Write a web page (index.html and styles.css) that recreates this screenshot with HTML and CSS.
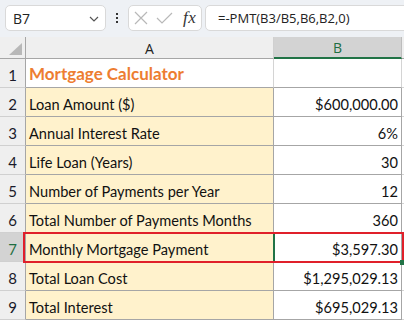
FILE: index.html
```html
<!DOCTYPE html>
<html>
<head>
<meta charset="utf-8">
<link rel="stylesheet" href="styles.css">
</head>
<body>
<div class="toolbar">
  <div class="namebox">
    <span class="nb-text">B7</span>
    <svg class="chev" width="10" height="6" viewBox="0 0 10 6"><path d="M1 1 L5 5 L9 1" fill="none" stroke="#555" stroke-width="1.2"/></svg>
  </div>
  <div class="dots"><span></span><span></span><span></span></div>
  <div class="fxbox">
    <svg class="ic" width="14" height="14" viewBox="0 0 14 14"><path d="M1 1 L13 13 M13 1 L1 13" stroke="#b8b8b8" stroke-width="1.2" fill="none"/></svg>
    <svg class="ic" width="17" height="12" viewBox="0 0 17 12"><path d="M1 6 L6 11 L16 1" stroke="#b8b8b8" stroke-width="1.2" fill="none"/></svg>
    <span class="fx">fx</span>
  </div>
  <div class="formula">=-PMT(B3/B5,B6,B2,0)</div>
</div>
<div class="sheet">
  <div class="corner"><span class="tri"></span></div>
  <div class="ch">A</div>
  <div class="ch sel">B</div>
  <div class="ch rest"></div>

  <div class="rh">1</div>
  <div class="c a plain title">Mortgage Calculator</div>
  <div class="c b plain"></div>
  <div class="c rest"></div>

  <div class="rh">2</div>
  <div class="c a">Loan Amount ($)</div>
  <div class="c b">$600,000.00</div>
  <div class="c rest"></div>

  <div class="rh">3</div>
  <div class="c a">Annual Interest Rate</div>
  <div class="c b">6%</div>
  <div class="c rest"></div>

  <div class="rh">4</div>
  <div class="c a">Life Loan (Years)</div>
  <div class="c b">30</div>
  <div class="c rest"></div>

  <div class="rh">5</div>
  <div class="c a">Number of Payments per Year</div>
  <div class="c b">12</div>
  <div class="c rest"></div>

  <div class="rh">6</div>
  <div class="c a">Total Number of Payments Months</div>
  <div class="c b">360</div>
  <div class="c rest"></div>

  <div class="rh rsel">7</div>
  <div class="c a">Monthly Mortgage Payment</div>
  <div class="c b">$3,597.30</div>
  <div class="c rest"></div>

  <div class="rh">8</div>
  <div class="c a">Total Loan Cost</div>
  <div class="c b">$1,295,029.13</div>
  <div class="c rest"></div>

  <div class="rh">9</div>
  <div class="c a">Total Interest</div>
  <div class="c b">$695,029.13</div>
  <div class="c rest"></div>

  <div class="selbox"></div>
  <div class="redbox"></div>
  <div class="handle"></div>
</div>
</body>
</html>
```
FILE: styles.css
```css
* { box-sizing: border-box; }
html, body { margin: 0; padding: 0; }
body {
  width: 404px;
  height: 321px;
  overflow: hidden;
  background: #fff;
  font-family: "Lato", "Liberation Sans", sans-serif;
}
.toolbar {
  height: 37px;
  background: #eef1f5;
  display: flex;
  align-items: flex-start;
  padding: 5px 0 0 5px;
}
.namebox {
  width: 101px;
  height: 26px;
  background: #fff;
  border: 1px solid #d9d9d9;
  border-radius: 5px;
  display: flex;
  align-items: center;
  justify-content: space-between;
  padding: 0 6px 0 7px;
}
.nb-text {
  font-family: "Open Sans", "Noto Sans", sans-serif;
  font-size: 14px;
  color: #222;
}
.chev { margin-top: 1px; }
.dots {
  width: 22px;
  height: 26px;
  display: flex;
  flex-direction: column;
  align-items: center;
  justify-content: center;
  gap: 2px;
}
.dots span {
  width: 2px;
  height: 2px;
  background: #333;
}
.fxbox {
  width: 74px;
  height: 26px;
  background: #fff;
  border: 1px solid #d9d9d9;
  border-radius: 5px;
  display: flex;
  align-items: center;
  padding: 0 0 0 5px;
  gap: 8px;
}
.fx {
  font-family: "Liberation Serif", "DejaVu Serif", serif;
  font-style: italic;
  font-size: 17px;
  color: #333;
  margin-left: 2px;
  letter-spacing: 0.5px;
}
.formula {
  flex: 1;
  margin-left: 3px;
  margin-right: -10px;
  height: 26px;
  background: #fff;
  border: 1px solid #d9d9d9;
  border-radius: 5px;
  display: flex;
  align-items: center;
  padding-left: 12px;
  font-family: "Open Sans", "Noto Sans", sans-serif;
  font-size: 13px;
  color: #222;
}
.sheet {
  position: relative;
  display: grid;
  grid-template-columns: 26px 248px 128px 2px;
  grid-template-rows: 22px repeat(9, 29px);
  height: 284px;
  overflow: hidden;
}
.corner {
  position: relative;
  background: #efefef;
  border-right: 1px solid #a6a6a6;
  border-bottom: 1px solid #a6a6a6;
}
.tri {
  position: absolute;
  right: 3px;
  bottom: 3px;
  width: 0;
  height: 0;
  border-left: 13px solid transparent;
  border-bottom: 12px solid #b8b8b8;
}
.ch {
  background: #efefef;
  border-right: 1px solid #d0d0d0;
  border-bottom: 1px solid #a6a6a6;
  display: flex;
  align-items: center;
  justify-content: center;
  font-family: "Open Sans", "Noto Sans", sans-serif;
  font-size: 14px;
  color: #222;
  padding-top: 1px;
}
.ch.sel {
  background: #d3d3d3;
  color: #1e6e42;
  border-bottom: 2px solid #217346;
  border-right-color: #bdbdbd;
}
.ch.rest { border-right: none; }
.rh {
  background: #efefef;
  border-right: 1px solid #a6a6a6;
  border-bottom: 1px solid #d0d0d0;
  display: flex;
  align-items: flex-end;
  justify-content: center;
  padding-bottom: 3px;
  font-size: 15px;
  color: #1a1a2a;
}
.rh.rsel {
  background: #d3d3d3;
  color: #1e6e42;
}
.c {
  border-right: 1px solid #a6a6a6;
  border-bottom: 1px solid #a6a6a6;
  display: flex;
  align-items: flex-end;
  padding: 0 3px 3px 3px;
  font-size: 14.6px;
  color: #111;
  white-space: nowrap;
  overflow: hidden;
}
.c.a { background: #fff2cc; }
.c.b { justify-content: flex-end; background: #fff; }
.c.plain { background: #fff; border-right-color: #d4d4d4; }
.c.rest { border-right: none; background: #fff; border-bottom-color: #d4d4d4; }
.c.title {
  color: #ed7d31;
  font-weight: bold;
  font-size: 17px;
}
.selbox {
  position: absolute;
  left: 273px;
  top: 195px;
  width: 2px;
  height: 29px;
  background: #217346;
}
.redbox {
  position: absolute;
  left: 23px;
  top: 195px;
  width: 381px;
  height: 31px;
  border: 2px solid #e0202a;
}
.handle {
  position: absolute;
  left: 400px;
  top: 223px;
  width: 4px;
  height: 5px;
  background: #217346;
}
```
